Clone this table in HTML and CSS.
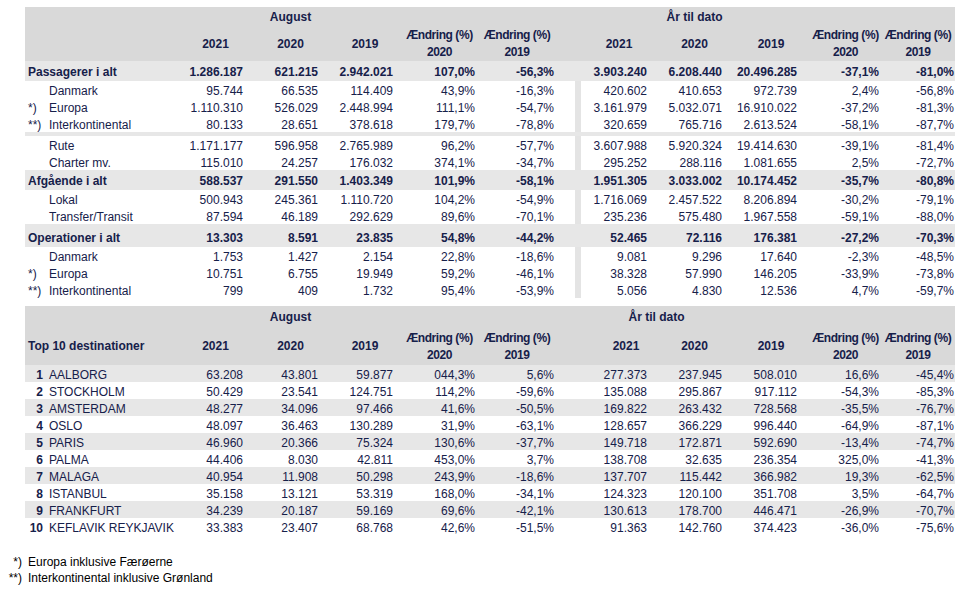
FILE: index.html
```html
<!DOCTYPE html>
<html lang="da">
<head>
<meta charset="utf-8">
<title>Trafiktal August 2021</title>
<link rel="stylesheet" href="styles.css">
</head>
<body>
<div class="sheet">
  <section class="tbl main">
    <div class="hd">
      <div class="grid hd-top">
        <span class="aug">August</span>
        <span class="ytd">År til dato</span>
      </div>
      <div class="grid hd-bot">
        <span></span><span>2021</span><span>2020</span><span>2019</span><span class="chg">Ændring (%)<br>2020</span><span class="chg">Ændring (%)<br>2019</span>
        <span></span><span>2021</span><span>2020</span><span>2019</span><span class="chg">Ændring (%)<br>2020</span><span class="chg">Ændring (%)<br>2019</span>
      </div>
    </div>
    <div class="grid row tot"><span class="lab">Passagerer i alt</span><span>1.286.187</span><span>621.215</span><span>2.942.021</span><span>107,0%</span><span>-56,3%</span><span class="sep"></span><span>3.903.240</span><span>6.208.440</span><span>20.496.285</span><span>-37,1%</span><span>-81,0%</span></div>
    <div class="grid row"><span class="lab"><i class="mk"></i>Danmark</span><span>95.744</span><span>66.535</span><span>114.409</span><span>43,9%</span><span>-16,3%</span><span class="sep"></span><span>420.602</span><span>410.653</span><span>972.739</span><span>2,4%</span><span>-56,8%</span></div>
    <div class="grid row"><span class="lab"><i class="mk">*)</i>Europa</span><span>1.110.310</span><span>526.029</span><span>2.448.994</span><span>111,1%</span><span>-54,7%</span><span class="sep"></span><span>3.161.979</span><span>5.032.071</span><span>16.910.022</span><span>-37,2%</span><span>-81,3%</span></div>
    <div class="grid row"><span class="lab"><i class="mk">**)</i>Interkontinental</span><span>80.133</span><span>28.651</span><span>378.618</span><span>179,7%</span><span>-78,8%</span><span class="sep"></span><span>320.659</span><span>765.716</span><span>2.613.524</span><span>-58,1%</span><span>-87,7%</span></div>
    <div class="gap"></div>
    <div class="grid row"><span class="lab"><i class="mk"></i>Rute</span><span>1.171.177</span><span>596.958</span><span>2.765.989</span><span>96,2%</span><span>-57,7%</span><span class="sep"></span><span>3.607.988</span><span>5.920.324</span><span>19.414.630</span><span>-39,1%</span><span>-81,4%</span></div>
    <div class="grid row"><span class="lab"><i class="mk"></i>Charter mv.</span><span>115.010</span><span>24.257</span><span>176.032</span><span>374,1%</span><span>-34,7%</span><span class="sep"></span><span>295.252</span><span>288.116</span><span>1.081.655</span><span>2,5%</span><span>-72,7%</span></div>
    <div class="grid row tot"><span class="lab">Afgående i alt</span><span>588.537</span><span>291.550</span><span>1.403.349</span><span>101,9%</span><span>-58,1%</span><span class="sep"></span><span>1.951.305</span><span>3.033.002</span><span>10.174.452</span><span>-35,7%</span><span>-80,8%</span></div>
    <div class="grid row"><span class="lab"><i class="mk"></i>Lokal</span><span>500.943</span><span>245.361</span><span>1.110.720</span><span>104,2%</span><span>-54,9%</span><span class="sep"></span><span>1.716.069</span><span>2.457.522</span><span>8.206.894</span><span>-30,2%</span><span>-79,1%</span></div>
    <div class="grid row"><span class="lab"><i class="mk"></i>Transfer/Transit</span><span>87.594</span><span>46.189</span><span>292.629</span><span>89,6%</span><span>-70,1%</span><span class="sep"></span><span>235.236</span><span>575.480</span><span>1.967.558</span><span>-59,1%</span><span>-88,0%</span></div>
    <div class="gap"></div>
    <div class="grid row tot short"><span class="lab">Operationer i alt</span><span>13.303</span><span>8.591</span><span>23.835</span><span>54,8%</span><span>-44,2%</span><span class="sep"></span><span>52.465</span><span>72.116</span><span>176.381</span><span>-27,2%</span><span>-70,3%</span></div>
    <div class="grid row"><span class="lab"><i class="mk"></i>Danmark</span><span>1.753</span><span>1.427</span><span>2.154</span><span>22,8%</span><span>-18,6%</span><span class="sep"></span><span>9.081</span><span>9.296</span><span>17.640</span><span>-2,3%</span><span>-48,5%</span></div>
    <div class="grid row"><span class="lab"><i class="mk">*)</i>Europa</span><span>10.751</span><span>6.755</span><span>19.949</span><span>59,2%</span><span>-46,1%</span><span class="sep"></span><span>38.328</span><span>57.990</span><span>146.205</span><span>-33,9%</span><span>-73,8%</span></div>
    <div class="grid row"><span class="lab"><i class="mk">**)</i>Interkontinental</span><span>799</span><span>409</span><span>1.732</span><span>95,4%</span><span>-53,9%</span><span class="sep"></span><span>5.056</span><span>4.830</span><span>12.536</span><span>4,7%</span><span>-59,7%</span></div>
  </section>

  <section class="tbl t10">
    <div class="hd">
      <div class="grid hd-top">
        <span class="aug">August</span>
        <span class="ytd">År til dato</span>
      </div>
      <div class="grid hd-bot">
        <span class="ttl">Top 10 destinationer</span><span>2021</span><span>2020</span><span>2019</span><span class="chg">Ændring (%)<br>2020</span><span class="chg">Ændring (%)<br>2019</span>
        <span></span><span class="y21">2021</span><span>2020</span><span>2019</span><span class="chg">Ændring (%)<br>2020</span><span class="chg">Ændring (%)<br>2019</span>
      </div>
    </div>
    <div class="rows">
      <div class="grid row"><span class="lab"><b class="rk">1</b>AALBORG</span><span>63.208</span><span>43.801</span><span>59.877</span><span>044,3%</span><span>5,6%</span><span class="sep"></span><span>277.373</span><span>237.945</span><span>508.010</span><span>16,6%</span><span>-45,4%</span></div>
      <div class="grid row"><span class="lab"><b class="rk">2</b>STOCKHOLM</span><span>50.429</span><span>23.541</span><span>124.751</span><span>114,2%</span><span>-59,6%</span><span class="sep"></span><span>135.088</span><span>295.867</span><span>917.112</span><span>-54,3%</span><span>-85,3%</span></div>
      <div class="grid row"><span class="lab"><b class="rk">3</b>AMSTERDAM</span><span>48.277</span><span>34.096</span><span>97.466</span><span>41,6%</span><span>-50,5%</span><span class="sep"></span><span>169.822</span><span>263.432</span><span>728.568</span><span>-35,5%</span><span>-76,7%</span></div>
      <div class="grid row"><span class="lab"><b class="rk">4</b>OSLO</span><span>48.097</span><span>36.463</span><span>130.289</span><span>31,9%</span><span>-63,1%</span><span class="sep"></span><span>128.657</span><span>366.229</span><span>996.440</span><span>-64,9%</span><span>-87,1%</span></div>
      <div class="grid row"><span class="lab"><b class="rk">5</b>PARIS</span><span>46.960</span><span>20.366</span><span>75.324</span><span>130,6%</span><span>-37,7%</span><span class="sep"></span><span>149.718</span><span>172.871</span><span>592.690</span><span>-13,4%</span><span>-74,7%</span></div>
      <div class="grid row"><span class="lab"><b class="rk">6</b>PALMA</span><span>44.406</span><span>8.030</span><span>42.811</span><span>453,0%</span><span>3,7%</span><span class="sep"></span><span>138.708</span><span>32.635</span><span>236.354</span><span>325,0%</span><span>-41,3%</span></div>
      <div class="grid row"><span class="lab"><b class="rk">7</b>MALAGA</span><span>40.954</span><span>11.908</span><span>50.298</span><span>243,9%</span><span>-18,6%</span><span class="sep"></span><span>137.707</span><span>115.442</span><span>366.982</span><span>19,3%</span><span>-62,5%</span></div>
      <div class="grid row"><span class="lab"><b class="rk">8</b>ISTANBUL</span><span>35.158</span><span>13.121</span><span>53.319</span><span>168,0%</span><span>-34,1%</span><span class="sep"></span><span>124.323</span><span>120.100</span><span>351.708</span><span>3,5%</span><span>-64,7%</span></div>
      <div class="grid row"><span class="lab"><b class="rk">9</b>FRANKFURT</span><span>34.239</span><span>20.187</span><span>59.169</span><span>69,6%</span><span>-42,1%</span><span class="sep"></span><span>130.613</span><span>178.700</span><span>446.471</span><span>-26,9%</span><span>-70,7%</span></div>
      <div class="grid row"><span class="lab"><b class="rk">10</b>KEFLAVIK REYKJAVIK</span><span>33.383</span><span>23.407</span><span>68.768</span><span>42,6%</span><span>-51,5%</span><span class="sep"></span><span>91.363</span><span>142.760</span><span>374.423</span><span>-36,0%</span><span>-75,6%</span></div>
    </div>
  </section>
</div>

<div class="notes">
  <p><span class="fm">*)</span>Europa inklusive Færøerne</p>
  <p><span class="fm">**)</span>Interkontinental inklusive Grønland</p>
</div>
</body>
</html>
```

FILE: styles.css
```css
html, body {
  margin: 0;
  padding: 0;
  background: #ffffff;
}

body {
  font-family: "Liberation Sans", Arial, sans-serif;
  font-size: 12px;
  color: #16204a;
}

.sheet {
  padding: 7px 0 0 25px;
  width: 930px;
}

.grid {
  display: grid;
  grid-template-columns: 153px 75px 75px 74px 75px 80px 24px 76px 75px 78px 71px 74px;
}

/* header */
.hd {
  background: #d9d9d9;
  font-weight: bold;
}

.hd-top {
  grid-template-rows: 20px;
  line-height: 20px;
}

.hd-bot {
  grid-template-rows: 34px;
  align-items: center;
  text-align: center;
  line-height: 17px;
}

.hd-bot > span {
  display: flex;
  flex-direction: column;
  align-items: center;
  white-space: nowrap;
  min-width: 0;
}

.hd-bot > .chg {
  display: block;
  text-align: center;
  letter-spacing: -0.45px;
  margin: 0 -6px;
}

.aug {
  grid-column: 3;
  text-align: center;
}

.ytd {
  grid-column: 9;
  text-align: center;
}

.t10 {
  margin-top: 8px;
}

.t10 .hd-top {
  grid-template-rows: 22px;
  line-height: 22px;
}

.t10 .hd-bot {
  grid-template-rows: 37px;
}

.t10 .ytd {
  grid-column: 8 / 10;
}

.t10 .hd-bot > .y21 {
  padding-left: 14px;
}

.hd-bot > .ttl {
  align-items: flex-start;
  padding-left: 3px;
}

/* body rows */
.row {
  grid-template-rows: 17px;
  line-height: 20px;
  white-space: nowrap;
  text-align: right;
}

.row > span {
  min-width: 0;
}

.row > :nth-child(2),
.row > :nth-child(3),
.row > :nth-child(8),
.row > :nth-child(9) {
  padding-right: 10px;
}

.row > :nth-child(4) {
  padding-right: 9px;
}

.row > :nth-child(5),
.row > :nth-child(11) {
  padding-right: 2px;
}

.row > :nth-child(6) {
  padding-right: 3px;
}

.row > :nth-child(10) {
  padding-right: 13px;
}

.row > :nth-child(12) {
  padding-right: 1px;
}

.lab {
  display: flex;
  text-align: left;
  padding-left: 3px;
}

.mk {
  font-style: normal;
  width: 21px;
  flex: none;
}

.rk {
  width: 15px;
  flex: none;
  text-align: right;
  margin-right: 6px;
}

.sep {
  border-right: 6px solid #e4e4e4;
}

.tot {
  grid-template-rows: 20px;
  line-height: 22px;
  background: #e7e7e7;
  font-weight: bold;
}

.tot.short {
  grid-template-rows: 19px;
  line-height: 21px;
}

.tot .sep {
  border-right-color: #e7e7e7;
}

.gap {
  height: 4px;
  background: #e7e7e7;
}

.t10 .sep {
  border-right: 0;
}

.rows .row:nth-child(odd) {
  background: #e7e7e7;
}

/* footnotes */
.notes {
  margin-top: 19px;
  padding-left: 6px;
  color: #000000;
  font-family: "Liberation Sans", Arial, sans-serif;
  font-size: 12px;
  line-height: 16px;
}

.notes p {
  margin: 0;
}

.fm {
  display: inline-block;
  width: 16px;
  text-align: right;
  margin-right: 6px;
}
```
